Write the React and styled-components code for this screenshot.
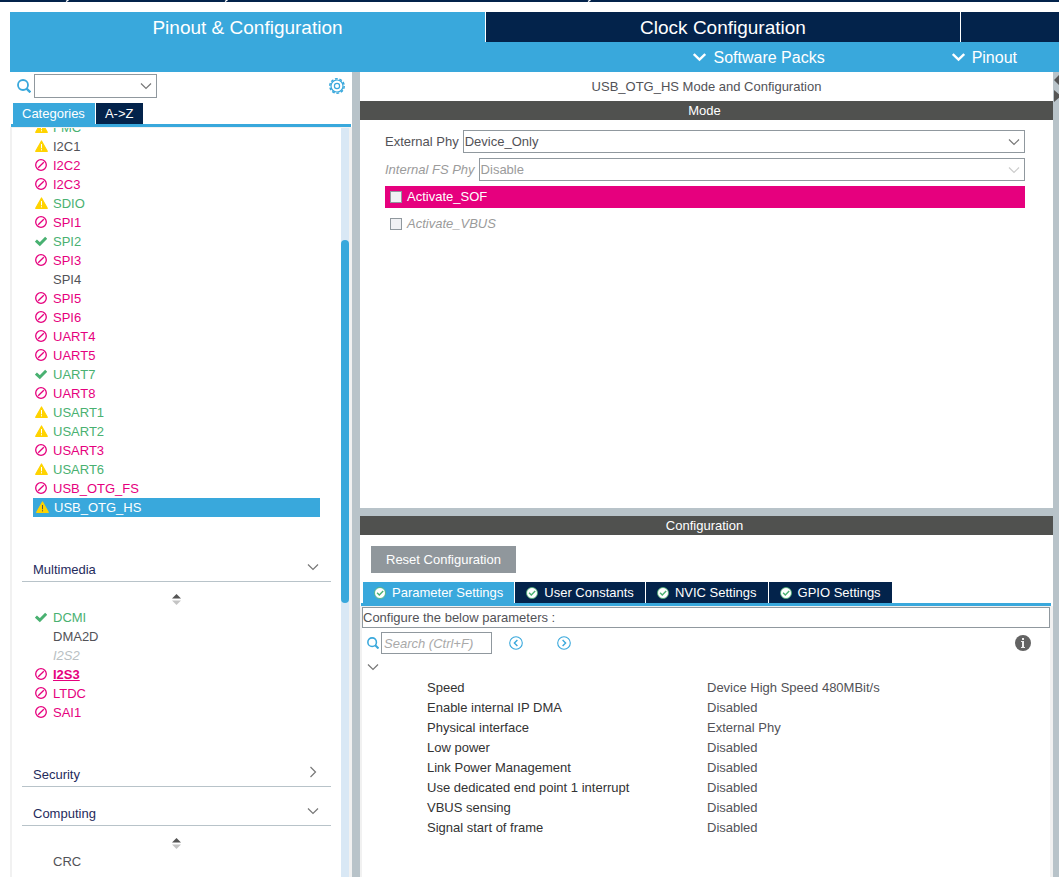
import React from 'react';
import styled, { createGlobalStyle, css } from 'styled-components';

const colors = {
  blue: '#39a8dc',
  navy: '#03234b',
  pink: '#e6007e',
  green: '#49b171',
  yellow: '#ffd300',
  bar: '#50514f',
  splitter: '#b8c3c9',
  border: '#90989e',
  frame: '#f1f1f1',
  text: '#525257',
  muted: '#9b9b9b'
};

const connectivity = [
  { name: 'FMC', icon: 'warn', color: 'green' },
  { name: 'I2C1', icon: 'warn' },
  { name: 'I2C2', icon: 'ban', color: 'pink' },
  { name: 'I2C3', icon: 'ban', color: 'pink' },
  { name: 'SDIO', icon: 'warn', color: 'green' },
  { name: 'SPI1', icon: 'ban', color: 'pink' },
  { name: 'SPI2', icon: 'check', color: 'green' },
  { name: 'SPI3', icon: 'ban', color: 'pink' },
  { name: 'SPI4' },
  { name: 'SPI5', icon: 'ban', color: 'pink' },
  { name: 'SPI6', icon: 'ban', color: 'pink' },
  { name: 'UART4', icon: 'ban', color: 'pink' },
  { name: 'UART5', icon: 'ban', color: 'pink' },
  { name: 'UART7', icon: 'check', color: 'green' },
  { name: 'UART8', icon: 'ban', color: 'pink' },
  { name: 'USART1', icon: 'warn', color: 'green' },
  { name: 'USART2', icon: 'warn', color: 'green' },
  { name: 'USART3', icon: 'ban', color: 'pink' },
  { name: 'USART6', icon: 'warn', color: 'green' },
  { name: 'USB_OTG_FS', icon: 'ban', color: 'pink' },
  { name: 'USB_OTG_HS', icon: 'warn', selected: true }
];

const multimedia = [
  { name: 'DCMI', icon: 'check', color: 'green' },
  { name: 'DMA2D' },
  { name: 'I2S2', unavailable: true },
  { name: 'I2S3', icon: 'ban', color: 'pink', focused: true },
  { name: 'LTDC', icon: 'ban', color: 'pink' },
  { name: 'SAI1', icon: 'ban', color: 'pink' }
];

const computing = [{ name: 'CRC' }];

const configTabs = ['Parameter Settings', 'User Constants', 'NVIC Settings', 'GPIO Settings'];

const parameters = [
  ['Speed', 'Device High Speed 480MBit/s'],
  ['Enable internal IP DMA', 'Disabled'],
  ['Physical interface', 'External Phy'],
  ['Low power', 'Disabled'],
  ['Link Power Management', 'Disabled'],
  ['Use dedicated end point 1 interrupt', 'Disabled'],
  ['VBUS sensing', 'Disabled'],
  ['Signal start of frame', 'Disabled']
];

/* Icons */

const SearchIcon = ({ size }) => (
  <svg width={size} height={size} viewBox="0 0 14 14" fill="none" stroke={colors.blue}>
    <circle cx="6" cy="6" r="5" strokeWidth="1.8" />
    <path d="M9.6 9.6 L13.4 13.4" strokeWidth="2.4" />
  </svg>
);

const Chevron = ({ color = '#777', right }) => (
  <svg width="12" height="16" viewBox="0 0 12 16" fill="none" stroke={color} strokeWidth="1.2">
    <path d={right ? 'M3.5 3 L8.5 8 L3.5 13' : 'M1 5.5 L6 10.5 L11 5.5'} />
  </svg>
);

const BoldChevron = () => (
  <svg width="13" height="10" viewBox="0 0 13 10" fill="none" stroke="#fff" strokeWidth="2.4">
    <path d="M0.8 2 L6.5 7.6 L12.2 2" />
  </svg>
);

const GearIcon = () => (
  <svg width="16" height="16" viewBox="0 0 16 16" fill="none" stroke={colors.blue}>
    <circle cx="8" cy="8" r="7.2" strokeWidth="1.5" strokeDasharray="2.8 1.72" />
    <circle cx="8" cy="8" r="6" strokeWidth="1.2" />
    <circle cx="8" cy="8" r="2.6" strokeWidth="1.2" />
  </svg>
);

const WarnIcon = ({ mark = '#fff' }) => (
  <svg width="13" height="12" viewBox="0 0 13 12">
    <path
      d="M6.5 1 L12.3 11.3 H0.7 Z"
      fill={colors.yellow}
      stroke={colors.yellow}
      strokeWidth="1.2"
      strokeLinejoin="round"
    />
    <path d="M6.5 4 V8.3 M6.5 9.2 V10.4" stroke={mark} strokeWidth="1" />
  </svg>
);

const BanIcon = () => (
  <svg width="12" height="12" viewBox="0 0 12 12" fill="none" stroke={colors.pink} strokeWidth="1.3">
    <circle cx="6" cy="6" r="5.3" />
    <path d="M3.2 8.8 L8.8 3.2" />
  </svg>
);

const CheckIcon = () => (
  <svg width="12" height="12" viewBox="0 0 12 12" fill="none" stroke={colors.green} strokeWidth="3">
    <path d="M0.9 5.6 L4.8 9.2 L11.2 2.7" />
  </svg>
);

const TabCheckIcon = () => (
  <svg width="12" height="12" viewBox="0 0 12 12" fill="none">
    <circle cx="6" cy="6" r="5.5" fill="#fff" stroke={colors.green} strokeWidth="0.8" />
    <path d="M3.1 5.8 L5.3 8.1 L9.2 4.1" stroke={colors.green} strokeWidth="1.4" />
  </svg>
);

const SortIcon = () => (
  <svg width="9" height="11" viewBox="0 0 9 11">
    <path d="M0 4.5 L4.5 0 L9 4.5 Z" fill="#555" />
    <path d="M0 6.5 H9 L4.5 11 Z" fill="#c4c4c4" />
  </svg>
);

const StepIcon = ({ next }) => (
  <svg width="14" height="14" viewBox="0 0 14 14" fill="none" stroke={colors.blue}>
    <circle cx="7" cy="7" r="6.3" strokeWidth="1.1" />
    <path d={next ? 'M5.6 4 L8.6 7 L5.6 10' : 'M8.4 4 L5.4 7 L8.4 10'} strokeWidth="1.4" />
  </svg>
);

const InfoIcon = () => (
  <svg width="16" height="16" viewBox="0 0 16 16">
    <circle cx="8" cy="8" r="8" fill="#636363" />
    <path d="M7 3 H9 V5 H7 Z M6 6 H9 V12 H10 V13 H6 V12 H7 V7 H6 Z" fill="#eee" />
  </svg>
);

const statusIcon = ip => {
  if (ip.icon === 'warn') return <WarnIcon mark={ip.selected ? '#555' : '#fff'} />;
  if (ip.icon === 'ban') return <BanIcon />;
  if (ip.icon === 'check') return <CheckIcon />;
  return null;
};

/* Sidebar */

const IpList = ({ items }) => (
  <List>
    {items.map(ip => (
      <li key={ip.name}>
        <IpRow
          $color={colors[ip.color]}
          $selected={ip.selected}
          $unavailable={ip.unavailable}
          $focused={ip.focused}
        >
          <IconSlot>{statusIcon(ip)}</IconSlot>
          <span>{ip.name}</span>
        </IpRow>
      </li>
    ))}
  </List>
);

const Category = ({ title, items }) => (
  <section>
    <CategoryHeader aria-expanded={!!items}>
      {title}
      <Chevron right={!items} />
    </CategoryHeader>
    {items && (
      <>
        <SortRow>
          <SortIcon />
        </SortRow>
        <IpList items={items} />
      </>
    )}
  </section>
);

const Sidebar = () => (
  <SidebarPanel>
    <SearchRow>
      <SearchIcon size={14} />
      <SelectBox $width="123px">
        <Select aria-label="Search peripherals" defaultValue="">
          <option value=""></option>
        </Select>
        <Chevron />
      </SelectBox>
      <IconButton $end aria-label="Settings">
        <GearIcon />
      </IconButton>
    </SearchRow>
    <SidebarTabs>
      <Tab $active>Categories</Tab>
      <Tab>A-&gt;Z</Tab>
    </SidebarTabs>
    <Tree>
      <TreeContent>
        <IpList items={connectivity} />
        <Category title="Multimedia" items={multimedia} />
        <Category title="Security" />
        <Category title="Computing" items={computing} />
      </TreeContent>
      <ScrollTrack>
        <ScrollThumb />
      </ScrollTrack>
    </Tree>
  </SidebarPanel>
);

const ModePane = () => (
  <Pane>
    <PaneTitle>USB_OTG_HS Mode and Configuration</PaneTitle>
    <PaneBar>Mode</PaneBar>
    <ModeForm>
      <FieldRow>
        <label htmlFor="external-phy">External Phy</label>
        <SelectBox>
          <Select id="external-phy" defaultValue="Device_Only">
            <option>Device_Only</option>
          </Select>
          <Chevron />
        </SelectBox>
      </FieldRow>
      <FieldRow $disabled>
        <label htmlFor="internal-phy">Internal FS Phy</label>
        <SelectBox>
          <Select id="internal-phy" defaultValue="Disable" disabled>
            <option>Disable</option>
          </Select>
          <Chevron color="#ccc" />
        </SelectBox>
      </FieldRow>
      <CheckRow $conflict>
        <Checkbox type="checkbox" />
        Activate_SOF
      </CheckRow>
      <CheckRow $disabled>
        <Checkbox type="checkbox" disabled />
        Activate_VBUS
      </CheckRow>
    </ModeForm>
  </Pane>
);

const ConfigurationPane = () => (
  <Pane>
    <PaneBar>Configuration</PaneBar>
    <ResetButton>Reset Configuration</ResetButton>
    <ConfigTabs>
      {configTabs.map((name, i) => (
        <Tab key={name} $active={i === 0} $withIcon>
          <TabCheckIcon />
          {name}
        </Tab>
      ))}
    </ConfigTabs>
    <ConfigBody>
      <Hint>Configure the below parameters :</Hint>
      <ParamTools>
        <SearchIcon size={12} />
        <SearchInput type="text" placeholder="Search (Ctrl+F)" aria-label="Search parameters" />
        <Steps>
          <IconButton aria-label="Previous match">
            <StepIcon />
          </IconButton>
          <IconButton aria-label="Next match">
            <StepIcon next />
          </IconButton>
        </Steps>
        <IconButton $end aria-label="Information">
          <InfoIcon />
        </IconButton>
      </ParamTools>
      <GroupToggle aria-label="Collapse group">
        <Chevron />
      </GroupToggle>
      <ParamTable>
        <tbody>
          {parameters.map(([name, value]) => (
            <tr key={name}>
              <th scope="row">{name}</th>
              <td>{value}</td>
            </tr>
          ))}
        </tbody>
      </ParamTable>
    </ConfigBody>
  </Pane>
);

const App = () => (
  <Page>
    <GlobalStyle />
    <TopEdge>
      <svg width="600" height="2" viewBox="0 0 600 2" stroke="#fff" strokeWidth="1.4">
        <path d="M66 1.5 L68.5 0 M225 1.5 L227.5 0 M588 1.5 L590.5 0" />
      </svg>
    </TopEdge>
    <Header>
      <MainTabs>
        <MainTab $active>Pinout &amp; Configuration</MainTab>
        <MainTab>Clock Configuration</MainTab>
        <MainTab aria-label="Project Manager" />
      </MainTabs>
      <SubBar>
        <MenuButton>
          <BoldChevron />
          Software Packs
        </MenuButton>
        <MenuButton>
          <BoldChevron />
          Pinout
        </MenuButton>
      </SubBar>
    </Header>
    <Workspace>
      <Sidebar />
      <Splitter />
      <Main>
        <ModePane />
        <Splitter />
        <ConfigurationPane />
      </Main>
      <Splitter>
        <svg width="8" height="34" viewBox="0 0 8 34" fill="#555">
          <path d="M1 8 L8 1 V15 Z M1 18 L8 24 L1 30 Z" />
        </svg>
      </Splitter>
    </Workspace>
  </Page>
);

const GlobalStyle = createGlobalStyle`
  * {
    box-sizing: border-box;
  }
  body {
    margin: 0;
    background: #fff;
    color: ${colors.text};
    font: 13px/19px 'Liberation Sans', Arial, sans-serif;
  }
  button, select, input {
    font: inherit;
    color: inherit;
    margin: 0;
  }
  button {
    border: 0;
    padding: 0;
    background: none;
    white-space: nowrap;
  }
  svg {
    display: block;
    flex: none;
  }
`;

const Page = styled.div`
  display: flex;
  flex-direction: column;
  height: 100vh;
  overflow: hidden;
`;

const TopEdge = styled.div`
  height: 2px;
  background: ${colors.navy};
  overflow: hidden;
`;

const Header = styled.header`
  margin: 10px 0 0 10px;
  background: ${colors.blue};
`;

const MainTabs = styled.nav`
  display: grid;
  grid-template-columns: 1fr 1fr 99px;
  height: 30px;
`;

const MainTab = styled.button`
  background: ${props => (props.$active ? colors.blue : colors.navy)};
  color: #fff;
  font-size: 19px;

  & + & {
    border-left: 1px solid #fff;
  }
`;

const SubBar = styled.div`
  display: flex;
  justify-content: flex-end;
  gap: 127px;
  height: 30px;
  padding-right: 42px;
`;

const MenuButton = styled.button`
  display: flex;
  align-items: center;
  gap: 7px;
  color: #fff;
  font-size: 16px;
`;

const Workspace = styled.div`
  flex: 1;
  min-height: 0;
  display: grid;
  grid-template-columns: minmax(0, 352fr) 8px minmax(0, 693fr) 6px;
`;

const Splitter = styled.div`
  background: ${colors.splitter};
  overflow: hidden;
`;

const SidebarPanel = styled.aside`
  display: flex;
  flex-direction: column;
  min-height: 0;
  padding-left: 10px;
`;

const SearchRow = styled.div`
  display: flex;
  align-items: center;
  gap: 3px;
  padding: 2px 7px 5px;
`;

const IconButton = styled.button`
  margin-left: ${props => (props.$end ? 'auto' : '0')};
`;

const SelectBox = styled.div`
  position: relative;
  flex: ${props => (props.$width ? `0 0 ${props.$width}` : '1')};
  height: ${props => (props.$width ? '24px' : '23px')};

  svg {
    position: absolute;
    right: 5px;
    top: calc(50% - 8px);
    pointer-events: none;
  }
`;

const Select = styled.select`
  appearance: none;
  display: block;
  width: 100%;
  height: 100%;
  padding: 0 20px 0 1px;
  border: 1px solid ${colors.border};
  border-radius: 0;
  background: #fff;

  &:disabled {
    color: ${colors.muted};
    opacity: 1;
  }
`;

const SidebarTabs = styled.div`
  display: flex;
  gap: 1px;
  margin: 0 1px;
  padding-left: 2px;
  border-bottom: 3px solid ${colors.blue};
`;

const Tab = styled.button`
  display: flex;
  align-items: center;
  gap: 6px;
  height: 21px;
  padding: 0 10px 0 9px;
  background: ${props => (props.$active ? colors.blue : colors.navy)};
  color: #fff;
  ${props =>
    props.$withIcon &&
    css`
      padding: 0 11px;
    `}
`;

const Tree = styled.div`
  flex: 1;
  min-height: 0;
  display: flex;
  overflow: hidden;
  border: solid ${colors.frame};
  border-width: 1px 3px 0 2px;
`;

/* scrolled so that the first row is half out of view */
const TreeContent = styled.div`
  flex: 1;
  margin-top: -10px;
  padding: 0 10px;
`;

const ScrollTrack = styled.div`
  display: grid;
  grid-template-rows: 112fr 363fr 274fr;
  width: 8px;
  background: #d9e8f5;
`;

const ScrollThumb = styled.div`
  grid-row: 2;
  border-radius: 4px;
  background: ${colors.blue};
`;

const List = styled.ul`
  list-style: none;
  margin: 0 11px 26px;
  padding: 0;
`;

const IpRow = styled.button`
  display: flex;
  align-items: flex-start;
  gap: 5px;
  width: 100%;
  height: 19px;
  padding-left: 2px;
  color: ${props => props.$color || colors.text};
  ${props =>
    props.$unavailable &&
    css`
      color: #b9bfc3;
      font-style: italic;
    `}
  ${props =>
    props.$focused &&
    css`
      font-weight: bold;
      text-decoration: underline;
    `}
  ${props =>
    props.$selected &&
    css`
      padding-left: 3px;
      background: ${colors.blue};
      color: #fff;
    `}
`;

const IconSlot = styled.span`
  width: 13px;
  padding-top: 3px;
`;

const CategoryHeader = styled.button`
  display: flex;
  justify-content: space-between;
  align-items: flex-start;
  width: 100%;
  height: 39px;
  padding: 16px 12px 0 11px;
  border-bottom: 1px solid ${colors.splitter};
  color: #1f2b5c;
  line-height: 22px;
`;

const SortRow = styled.div`
  display: flex;
  justify-content: center;
  height: 26px;
  padding-top: 12px;
`;

const Main = styled.main`
  display: grid;
  grid-template-rows: minmax(0, 436fr) 8px minmax(0, 361fr);
  min-height: 0;
`;

const Pane = styled.section`
  display: flex;
  flex-direction: column;
  min-height: 0;
`;

const PaneTitle = styled.div`
  text-align: center;
  line-height: 29px;
`;

const PaneBar = styled.h2`
  margin: 0;
  padding-right: 4px;
  background: ${colors.bar};
  color: #fff;
  font-size: 13px;
  font-weight: normal;
  line-height: 19px;
  text-align: center;
`;

const ModeForm = styled.form`
  display: flex;
  flex-direction: column;
  gap: 5px;
  padding: 10px 28px 0 25px;
`;

const FieldRow = styled.div`
  display: flex;
  align-items: center;
  gap: 4px;

  label {
    ${props =>
      props.$disabled &&
      css`
        color: ${colors.muted};
        font-style: italic;
      `}
  }
`;

const CheckRow = styled.label`
  display: flex;
  align-items: center;
  gap: 5px;
  height: 22px;
  padding-left: 5px;
  line-height: 20px;
  ${props =>
    props.$conflict &&
    css`
      background: ${colors.pink};
      color: #fff;
    `}
  ${props =>
    props.$disabled &&
    css`
      color: ${colors.muted};
      font-style: italic;
    `}
`;

const Checkbox = styled.input`
  appearance: none;
  width: 12px;
  height: 12px;
  border: 1px solid ${colors.border};
  background: #f0f1f4;
`;

const ResetButton = styled.button`
  align-self: flex-start;
  height: 27px;
  margin: 11px 0 9px 11px;
  padding: 0 15px;
  background: #90979c;
  color: #fff;
`;

const ConfigTabs = styled.div`
  display: flex;
  gap: 1px;
  margin: 0 2px 0 1px;
  padding-left: 2px;
  border-bottom: 3px solid ${colors.blue};
`;

const ConfigBody = styled.div`
  flex: 1;
  min-height: 0;
  border: solid ${colors.frame};
  border-width: 1px 3px 0 2px;
`;

const Hint = styled.div`
  border: 1px solid ${colors.border};
`;

const ParamTools = styled.div`
  display: flex;
  align-items: center;
  padding: 4px 19px 0 5px;
`;

const SearchInput = styled.input`
  width: 111px;
  height: 22px;
  margin-left: 2px;
  padding: 0 2px;
  border: 1px solid ${colors.border};
  background: #fff;

  &::placeholder {
    color: #a9a9a9;
    font-style: italic;
    opacity: 1;
  }
`;

const Steps = styled.div`
  display: flex;
  gap: 34px;
  margin-left: 17px;
`;

const GroupToggle = styled.button`
  display: block;
  padding: 5px 5px 2px;
`;

const ParamTable = styled.table`
  width: 100%;
  table-layout: fixed;
  border-collapse: collapse;

  th,
  td {
    height: 20px;
    padding: 0;
    text-align: left;
    font-weight: normal;
  }
  th {
    width: 345px;
    padding-left: 65px;
    color: #333;
  }
`;

export default App;
